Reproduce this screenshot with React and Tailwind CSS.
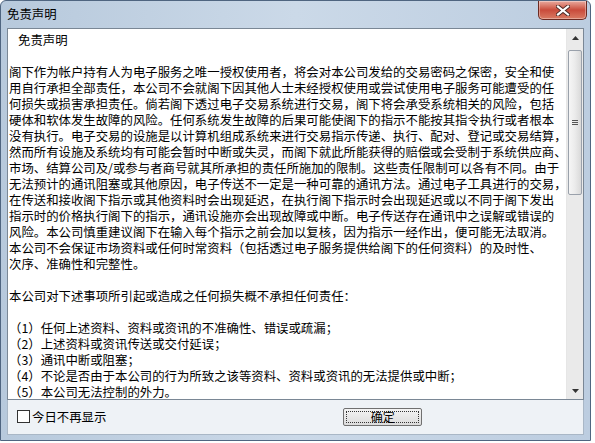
const FONT = { fontFamily: '"Noto Sans CJK SC", "Noto Sans", sans-serif' };

const PARAGRAPH = [
  "阁下作为帐户持有人为电子服务之唯一授权使用者，将会对本公司发给的交易密码之保密，安全和使",
  "用自行承担全部责任，本公司不会就阁下因其他人士未经授权使用或尝试使用电子服务可能遭受的任",
  "何损失或损害承担责任。倘若阁下透过电子交易系统进行交易，阁下将会承受系统相关的风险，包括",
  "硬体和软体发生故障的风险。任何系统发生故障的后果可能使阁下的指示不能按其指令执行或者根本",
  "没有执行。电子交易的设施是以计算机组成系统来进行交易指示传递、执行、配对、登记或交易结算，",
  "然而所有设施及系统均有可能会暂时中断或失灵，而阁下就此所能获得的赔偿或会受制于系统供应商、",
  "市场、结算公司及/或参与者商号就其所承担的责任所施加的限制。这些责任限制可以各有不同。由于",
  "无法预计的通讯阻塞或其他原因，电子传送不一定是一种可靠的通讯方法。通过电子工具进行的交易，",
  "在传送和接收阁下指示或其他资料时会出现延迟，在执行阁下指示时会出现延迟或以不同于阁下发出",
  "指示时的价格执行阁下的指示，通讯设施亦会出现故障或中断。电子传送存在通讯中之误解或错误的",
  "风险。本公司慎重建议阁下在输入每个指示之前会加以复核，因为指示一经作出，便可能无法取消。",
  "本公司不会保证市场资料或任何时常资料（包括透过电子服务提供给阁下的任何资料）的及时性、",
  "次序、准确性和完整性。",
  "",
  "本公司对下述事项所引起或造成之任何损失概不承担任何责任：",
  "",
  "（1）任何上述资料、资料或资讯的不准确性、错误或疏漏；",
  "（2）上述资料或资讯传送或交付延误；",
  "（3）通讯中断或阻塞；",
  "（4）不论是否由于本公司的行为所致之该等资料、资料或资讯的无法提供或中断；",
  "（5）本公司无法控制的外力。",
];

function CloseButton() {
  return (
    <div className="absolute right-[3px] top-0 flex h-[19px] w-[49px] items-center justify-center rounded-b-[5px] border border-t-0 border-[#6b2a22] bg-gradient-to-b from-[#e8a99e] via-[#c94b3b] to-[#d97a63] shadow-[inset_0_0_0_1px_rgba(255,255,255,0.35)]">
      <svg width="14" height="11" viewBox="0 0 14 11">
        <path d="M2 1.5 L12 9.5 M12 1.5 L2 9.5" stroke="#4a2a26" strokeWidth="4" strokeLinecap="square" />
        <path d="M2 1.5 L12 9.5 M12 1.5 L2 9.5" stroke="#ffffff" strokeWidth="2.2" strokeLinecap="square" />
      </svg>
    </div>
  );
}

function ScrollBar() {
  return (
    <div className="flex w-[17px] shrink-0 flex-col border-l border-[#e6e6e6] bg-[#eaeaea]">
      <div className="flex h-[17px] items-center justify-center">
        <svg width="7" height="4" viewBox="0 0 7 4">
          <path d="M0 4 L3.5 0 L7 4 Z" fill="#333" />
        </svg>
      </div>
      <div className="mx-[1px] mt-[4px] flex h-[145px] items-center justify-center rounded-[2px] border border-[#9aa1ab] bg-gradient-to-r from-[#f6f6f6] via-[#ebebeb] to-[#d9d9d9]">
        <div className="flex flex-col gap-[1px]">
          <div className="h-px w-[6px] bg-[#555]" />
          <div className="h-px w-[6px] bg-[#555]" />
          <div className="h-px w-[6px] bg-[#555]" />
        </div>
      </div>
      <div className="flex-1" />
      <div className="flex h-[17px] items-center justify-center">
        <svg width="7" height="4" viewBox="0 0 7 4">
          <path d="M0 0 L3.5 4 L7 0 Z" fill="#333" />
        </svg>
      </div>
    </div>
  );
}

export default function App() {
  return (
    <div className="h-[443px] w-[595px] overflow-hidden bg-white" style={FONT}>
      <div className="relative flex h-[441px] w-[591px] flex-col rounded-t-[6px] border border-[#4f6580] bg-gradient-to-r from-[#b7c9dc] via-[#cbd9e8] to-[#bccde0]">
        <div className="flex h-[27px] shrink-0 items-center pl-[6px] text-[12.4px] leading-none text-black">
          免责声明
        </div>
        <CloseButton />

        <div className="flex flex-1 flex-col px-[6px] pb-[5px]">
          <div className="flex h-[372px] border border-[#7a8795] bg-white">
            <div className="flex-1 overflow-hidden pl-[1px] pt-[3px] text-[12.4px] leading-[16px] text-black">
              <div className="h-[16px] whitespace-nowrap pl-[9px]">免责声明</div>
              <div className="h-[16px]" />
              {PARAGRAPH.map((line, i) => (
                <div key={i} className="h-[16px] whitespace-nowrap">
                  {line}
                </div>
              ))}
            </div>
            <ScrollBar />
          </div>

          <div className="relative flex flex-1 items-center border border-t-0 border-[#a9b7c6] bg-[#eef2f6]">
            <label className="flex items-center gap-[2px] pl-[9px] text-[12.4px] text-black">
              <span className="h-[13px] w-[13px] border border-[#333] bg-white" />
              今日不再显示
            </label>
            <div className="ml-[237px] flex h-[18px] w-[79px] items-center justify-center rounded-[2px] border border-[#707070] bg-gradient-to-b from-[#f4f4f4] to-[#dcdcdc] p-[2px]">
              <div className="flex h-full w-full items-center justify-center border border-dotted border-[#333] text-[12px] leading-none text-black">
                确定
              </div>
            </div>
          </div>
        </div>
      </div>
    </div>
  );
}
